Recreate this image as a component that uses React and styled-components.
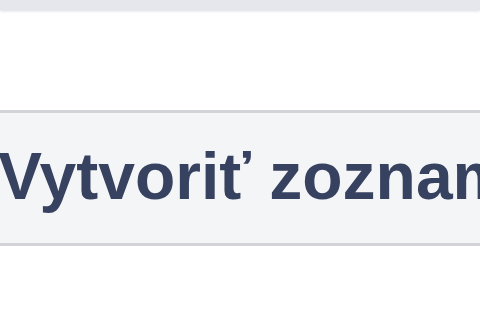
import styled, { createGlobalStyle } from 'styled-components'

const Global = createGlobalStyle`
  html, body {
    margin: 0;
    padding: 0;
    background: #ffffff;
    overflow: hidden;
  }
`

const Page = styled.div`
  width: 480px;
  height: 323px;
  display: flex;
  flex-direction: column;
  background: #fff;
  overflow: hidden;
`

const TopBar = styled.div`
  height: 10px;
  background: #e6e7ec;
  box-shadow: 0 1px 3px rgba(200, 202, 210, 0.7);
  flex-shrink: 0;
`

const Blank = styled.div`
  height: 100px;
  flex-shrink: 0;
`

const ListButton = styled.div`
  height: 136px;
  flex-shrink: 0;
  display: flex;
  align-items: center;
  background: #f4f5f7;
  border-top: 3px solid #d3d4d8;
  border-bottom: 3px solid #d3d4d8;
  font-family: "Liberation Sans", Arial, sans-serif;
  font-weight: bold;
  font-size: 66px;
  color: #36425f;
  white-space: nowrap;
  overflow: hidden;
  padding-bottom: 4px;
  text-indent: -2px;
  box-sizing: border-box;
`

export default function App() {
  return (
    <Page>
      <Global />
      <TopBar />
      <Blank />
      <ListButton>Vytvoriť zoznam</ListButton>
    </Page>
  )
}
